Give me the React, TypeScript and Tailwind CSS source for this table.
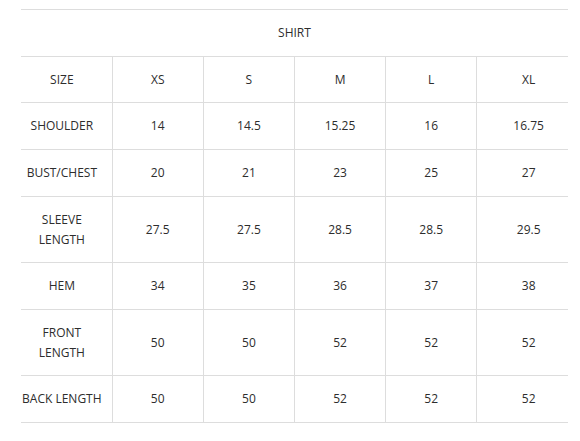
const SIZES = ["XS", "S", "M", "L", "XL"];

const ROWS: { label: string[]; values: string[] }[] = [
  { label: ["SHOULDER"], values: ["14", "14.5", "15.25", "16", "16.75"] },
  { label: ["BUST/CHEST"], values: ["20", "21", "23", "25", "27"] },
  { label: ["SLEEVE", "LENGTH"], values: ["27.5", "27.5", "28.5", "28.5", "29.5"] },
  { label: ["HEM"], values: ["34", "35", "36", "37", "38"] },
  { label: ["FRONT", "LENGTH"], values: ["50", "50", "52", "52", "52"] },
  { label: ["BACK LENGTH"], values: ["50", "50", "52", "52", "52"] },
];

const base = "border border-[#dddddd] py-[13px] text-center align-middle";
const labelCell = `${base} border-l-0 pl-0 pr-[9px]`;
const midCell = `${base} px-1`;
const lastCell = `${base} border-r-0 pl-[12px] pr-0`;

function Row({ label, values }: { label: React.ReactNode; values: string[] }) {
  return (
    <tr>
      <td className={labelCell}>{label}</td>
      {values.map((v, i) => (
        <td key={i} className={i === values.length - 1 ? lastCell : midCell}>
          {v}
        </td>
      ))}
    </tr>
  );
}

export default function App() {
  return (
    <div className="min-h-[441px] bg-white pl-[21px] pt-[9px] text-[12px] leading-[19.7px] text-[#2d2d2d] [font-family:'Open_Sans','Noto_Sans',sans-serif]">
      <table className="w-[547px] table-fixed border-collapse">
        <tbody>
          <tr>
            <td colSpan={6} className={`${base} border-x-0 px-0`}>
              SHIRT
            </td>
          </tr>
          <Row label="SIZE" values={SIZES} />
          {ROWS.map((r) => (
            <Row
              key={r.label.join(" ")}
              label={r.label.map((l) => (
                <div key={l}>{l}</div>
              ))}
              values={r.values}
            />
          ))}
        </tbody>
      </table>
    </div>
  );
}
